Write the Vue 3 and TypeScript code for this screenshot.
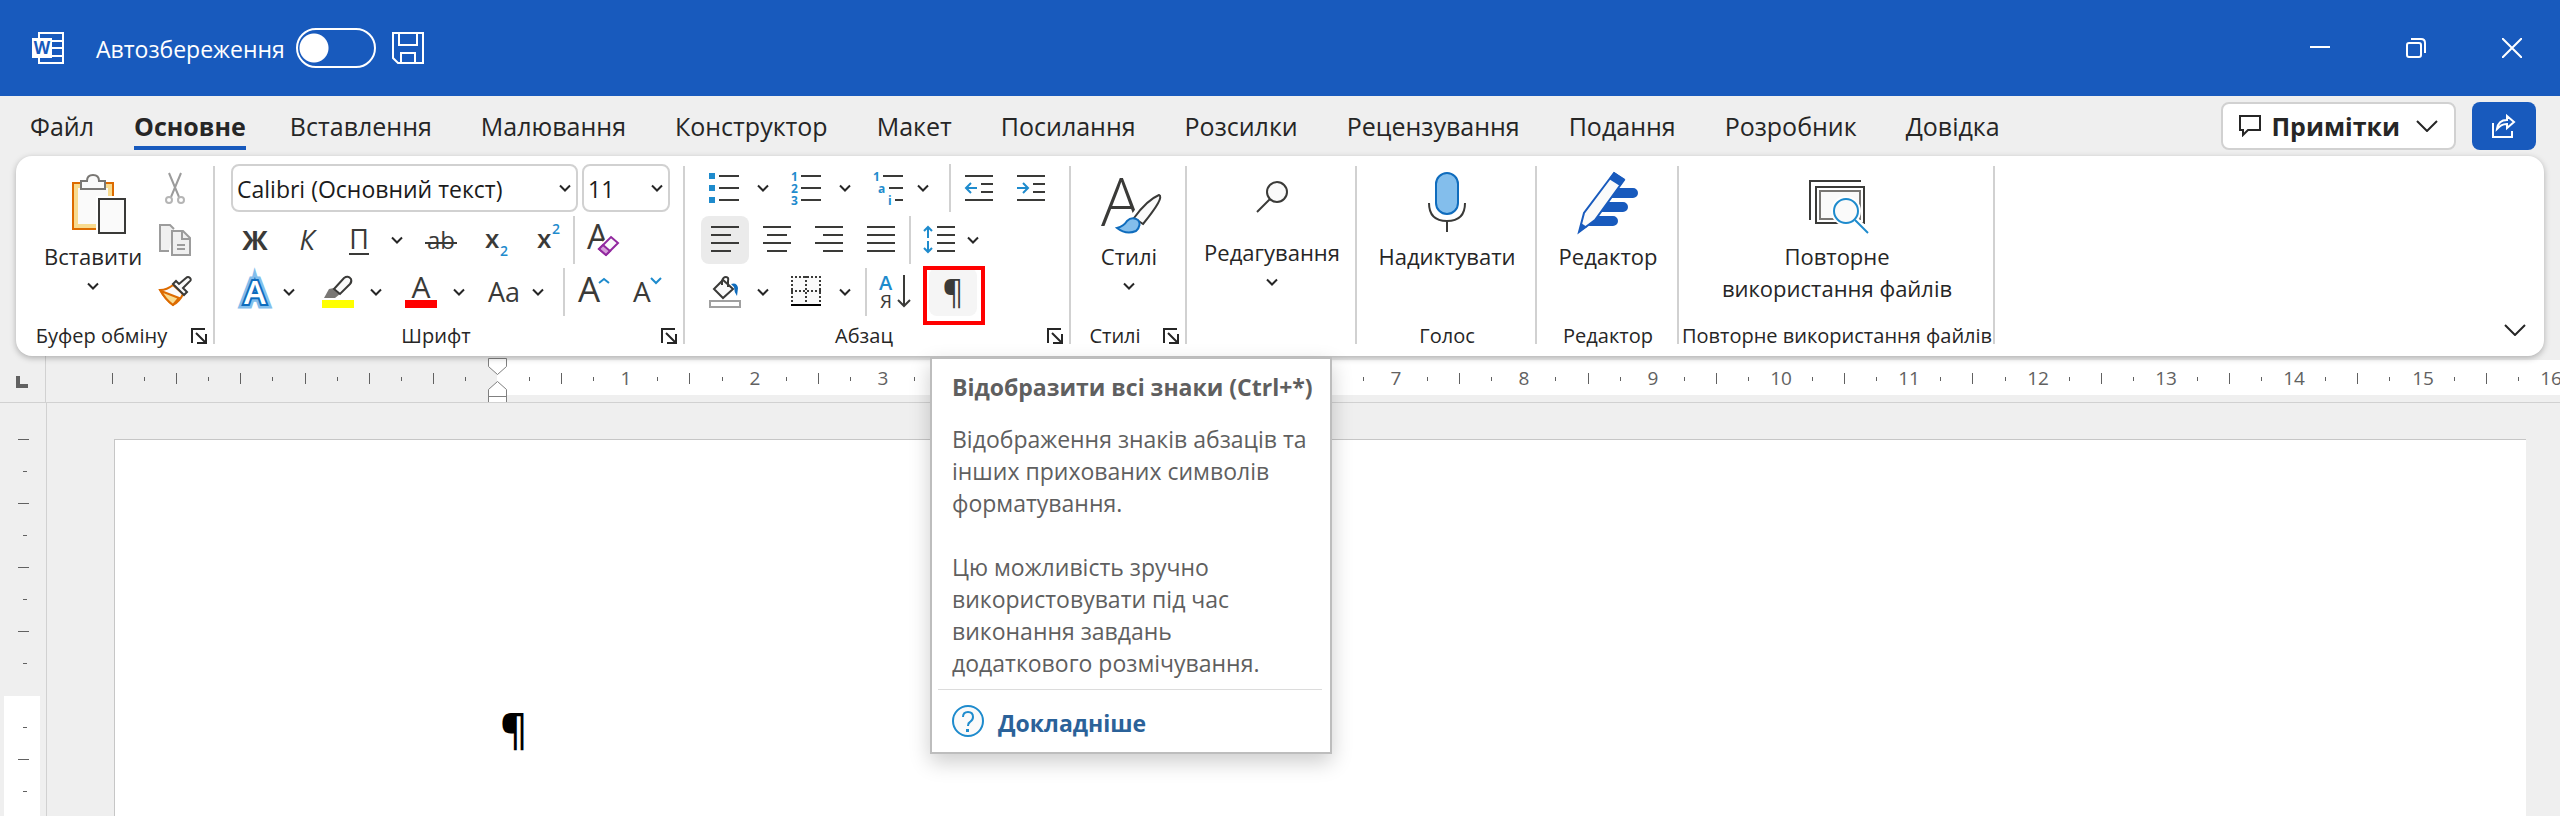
<script setup lang="ts">
import { ref } from 'vue'

const autosave = ref(false)
const fontName = ref('Calibri (Основний текст)')
const fontSize = ref('11')
const activeTab = ref('Основне')

const tabs: string[] = [
  'Файл', 'Основне', 'Вставлення', 'Малювання', 'Конструктор', 'Макет',
  'Посилання', 'Розсилки', 'Рецензування', 'Подання', 'Розробник', 'Довідка',
]

interface Tick { pos: number; long: boolean }
interface Mark { pos: number; label: string }

const unit = 128.3
const zero = 451

const ticks: Tick[] = []
const marks: Mark[] = []
for (let q = -12; q <= 64; q++) {
  const pos = Math.round(zero + (q * unit) / 4)
  if (q === 0) continue
  if (q > 0 && q % 4 === 0) marks.push({ pos: pos + 1, label: String(q / 4) })
  else ticks.push({ pos, long: q % 2 === 0 })
}

const sideTicks: Tick[] = []
for (let q = -8; q <= 20; q++) {
  if (q === 0 || (q > 0 && q % 4 === 0)) continue
  sideTicks.push({ pos: 292 + q * 32, long: q % 2 === 0 })
}

const alignments = [
  { name: 'Вирівняти за лівим краєм', d: 'M0 3H28M0 11H20M0 19H28M0 27H20', on: true },
  { name: 'По центру', d: 'M0 3H28M4 11H24M0 19H28M4 27H24', on: false },
  { name: 'Вирівняти за правим краєм', d: 'M0 3H28M8 11H28M0 19H28M8 27H28', on: false },
  { name: 'По ширині', d: 'M0 3H28M0 11H28M0 19H28M0 27H28', on: false },
]
</script>

<template>
  <div class="app">
    <svg class="defs" aria-hidden="true">
      <symbol id="chevron" viewBox="0 0 12 8">
        <path d="M1 1.5L6 6.5L11 1.5" fill="none" stroke="#262626" stroke-width="2" />
      </symbol>
      <symbol id="chevron-wide" viewBox="0 0 22 12">
        <path d="M1 1L11 11L21 1" fill="none" stroke="#262626" stroke-width="2" />
      </symbol>
      <symbol id="launcher" viewBox="0 0 16 16">
        <path d="M1 15V1H14M15 6V15H6M5 5L14 14" fill="none" stroke="#262626" stroke-width="2" />
      </symbol>
    </svg>

    <header class="titlebar">
      <svg class="word" width="32" height="32" viewBox="0 0 32 32" aria-hidden="true">
        <path d="M7 1H31V31H7ZM7 9H31M7 16H31M7 24H31" fill="none" stroke="#fff" stroke-width="2" />
        <rect x="0" y="6" width="20" height="20" fill="#fff" />
        <text x="10" y="22" text-anchor="middle" font-size="17" font-weight="700" fill="#185abd">W</text>
      </svg>
      <label class="autosave">
        <span>Автозбереження</span>
        <input v-model="autosave" type="checkbox" role="switch" />
      </label>
      <button class="save" aria-label="Зберегти">
        <svg width="32" height="32" viewBox="0 0 32 32">
          <path d="M1 1H31V31H6L1 26ZM7 1V13H25V1M9 31V21H23V31" fill="none" stroke="#fff" stroke-width="2" />
        </svg>
      </button>
      <div class="window-buttons">
        <button aria-label="Згорнути">
          <svg width="20" height="20" viewBox="0 0 20 20"><path d="M0 9H20" stroke="#fff" stroke-width="2" /></svg>
        </button>
        <button aria-label="Відновити">
          <svg width="20" height="20" viewBox="0 0 20 20" fill="none" stroke="#fff" stroke-width="2">
            <rect x="1" y="5" width="14" height="14" rx="2" />
            <path d="M5 1H15Q19 1 19 5V15" />
          </svg>
        </button>
        <button aria-label="Закрити">
          <svg width="20" height="20" viewBox="0 0 20 20"><path d="M0 0L20 20M20 0L0 20" stroke="#fff" stroke-width="2" /></svg>
        </button>
      </div>
    </header>

    <div class="tabbar">
      <nav class="tabs">
        <button
          v-for="t in tabs"
          :key="t"
          class="tab"
          :class="{ active: t === activeTab }"
          @click="activeTab = t"
        >{{ t }}</button>
      </nav>
      <button class="comments">
        <svg width="22" height="22" viewBox="0 0 22 22">
          <path d="M1 1H21V15H9L4 20V15H1Z" fill="none" stroke="#262626" stroke-width="2" />
        </svg>
        <span>Примітки</span>
        <svg width="22" height="12"><use href="#chevron-wide" /></svg>
      </button>
      <button class="share" aria-label="Спільний доступ">
        <svg width="24" height="24" viewBox="0 0 24 24" fill="none" stroke="#fff" stroke-width="2">
          <path d="M1 9V23H20V17" />
          <path d="M5 15C6 8 10 6 15 6V2L22 8L15 14V10C10 10 8 12 5 15Z" />
        </svg>
      </button>
    </div>

    <section class="ribbon">
      <div class="group clipboard">
        <div class="body">
          <button class="big">
            <svg width="64" height="64" viewBox="-6 0 64 64">
              <rect x="6" y="13" width="40" height="46" fill="#f8db8f" stroke="#dd6b00" stroke-width="2" />
              <rect x="11" y="18" width="30" height="36" fill="#fafafa" />
              <path d="M14 11H20Q20 5 26 5T32 11H38V19H14Z" fill="#fafafa" stroke="#797774" stroke-width="2" />
              <rect x="29" y="26" width="32" height="40" fill="#fff" />
              <rect x="32" y="29" width="26" height="34" fill="#fafafa" stroke="#3a3a38" stroke-width="2" />
            </svg>
            <span>Вставити</span>
            <svg class="down" width="12" height="8"><use href="#chevron" /></svg>
          </button>
          <div class="stack">
            <button class="tool" aria-label="Вирізати">
              <svg width="32" height="32" viewBox="0 0 32 32" fill="none" stroke="#9c9c9c">
                <path d="M10 1L20 25M22 1L12 25" stroke-width="2" />
                <circle cx="10" cy="28" r="3" stroke="#b5b5b5" stroke-width="2" />
                <circle cx="22" cy="28" r="3" stroke="#b5b5b5" stroke-width="2" />
              </svg>
            </button>
            <button class="tool" aria-label="Копіювати">
              <svg width="32" height="32" viewBox="0 0 32 32" fill="#f0f0f0" stroke="#9c9c9c" stroke-width="2">
                <path d="M10 27H1V1H11L15 5" />
                <path d="M13 7H24L31 14V31H13Z" />
                <path d="M23 7V15H31M18 21H26M18 25H26" fill="none" />
              </svg>
            </button>
            <button class="tool" aria-label="Формат за зразком">
              <svg width="32" height="32" viewBox="0 0 32 32" fill="none" stroke-width="2">
                <path d="M14 9Q8 14 1 14Q6 23 14 29Q21 25 24 18Z" fill="#fafafa" stroke="#dd6b00" />
                <path d="M2 15L20 22L14 29Q6 23 2 15Z" fill="#f8db8f" stroke="#dd6b00" />
                <path d="M14 8L17 5L20 8L27 2Q29 0 31 2T30 6L24 12L28 16L25 19Z" fill="#fafafa" stroke="#3a3a38" />
              </svg>
            </button>
          </div>
        </div>
        <footer><span>Буфер обміну</span><button class="launch" aria-label="Параметри буфера обміну"><svg width="16" height="16"><use href="#launcher" /></svg></button></footer>
      </div>

      <div class="group font">
        <div class="rows">
          <div class="row combos">
            <span class="combo name">
              <select v-model="fontName" aria-label="Шрифт"><option>Calibri (Основний текст)</option></select>
              <svg width="12" height="8"><use href="#chevron" /></svg>
            </span>
            <span class="combo size">
              <select v-model="fontSize" aria-label="Розмір шрифту"><option>11</option><option>12</option></select>
              <svg width="12" height="8"><use href="#chevron" /></svg>
            </span>
          </div>
          <div class="row">
            <button class="tool letter bold">Ж</button>
            <button class="tool letter italic">К</button>
            <button class="tool letter under"><span>П</span></button>
            <button class="drop" aria-label="Стиль підкреслення"><svg width="12" height="8"><use href="#chevron" /></svg></button>
            <button class="tool after-drop" aria-label="Закреслення">
              <svg width="32" height="32" viewBox="0 0 32 32">
                <text x="16" y="25" text-anchor="middle" font-size="24" fill="#3a3a38">ab</text>
                <path d="M0 19H32" stroke="#3a3a38" stroke-width="2" />
              </svg>
            </button>
            <button class="tool" aria-label="Нижній індекс">
              <svg width="32" height="36" viewBox="0 0 32 36">
                <text x="8" y="26" font-size="26" font-weight="600" fill="#3a3a38">x</text>
                <text x="23" y="34" font-size="14" font-weight="600" fill="#1e8bcd">2</text>
              </svg>
            </button>
            <button class="tool" aria-label="Верхній індекс">
              <svg width="32" height="36" viewBox="0 0 32 36">
                <text x="8" y="26" font-size="26" font-weight="600" fill="#3a3a38">x</text>
                <text x="23" y="12" font-size="14" font-weight="600" fill="#1e8bcd">2</text>
              </svg>
            </button>
            <i class="sep" />
            <button class="tool" aria-label="Очистити все форматування">
              <svg width="32" height="32" viewBox="0 0 32 32">
                <text x="0" y="25" font-size="34" font-weight="400" fill="#3a3a38">A</text>
                <path d="M24 13L31 19L19 31L12 25Z" fill="#fff" stroke="#fff" stroke-width="5" />
                <path d="M24 13L31 19L19 31L12 25Z" fill="#fafafa" stroke="#92299f" stroke-width="2" />
                <path d="M16 21L23 27L19 31L12 25Z" fill="#d59ed9" stroke="#92299f" stroke-width="2" />
              </svg>
            </button>
          </div>
          <div class="row grid83">
            <div class="split tight">
              <button class="tool" aria-label="Текстові ефекти">
                <svg width="36" height="34" viewBox="0 0 36 34">
                  <g font-size="33" font-weight="600" text-anchor="middle">
                    <text x="18" y="29" fill="#83beec" stroke="#83beec" stroke-width="9">A</text>
                    <text x="18" y="29" fill="#0f6cbd" stroke="#0f6cbd" stroke-width="4">A</text>
                    <text x="18" y="29" fill="#fff">A</text>
                  </g>
                </svg>
              </button>
              <button class="drop" aria-label="Вибрати ефект"><svg width="12" height="8"><use href="#chevron" /></svg></button>
            </div>
            <div class="split">
              <button class="tool" aria-label="Колір виділення тексту">
                <svg width="32" height="32" viewBox="0 0 32 32">
                  <path d="M2 22L7 13L12 12L18 18L13 22Z" fill="#797774" />
                  <path d="M12 13L22 2Q26 -1 29 3Q30 6 28 8L18 18Z" fill="#fafafa" stroke="#3a3a38" stroke-width="2" />
                  <rect y="24" width="32" height="8" fill="#ff0" />
                </svg>
              </button>
              <button class="drop" aria-label="Вибрати колір виділення"><svg width="12" height="8"><use href="#chevron" /></svg></button>
            </div>
            <div class="split">
              <button class="tool" aria-label="Колір шрифту">
                <svg width="32" height="32" viewBox="0 0 32 32">
                  <text x="16" y="22" text-anchor="middle" font-size="30" fill="#3a3a38">A</text>
                  <rect y="24" width="32" height="8" fill="#f00" />
                </svg>
              </button>
              <button class="drop" aria-label="Вибрати колір шрифту"><svg width="12" height="8"><use href="#chevron" /></svg></button>
            </div>
            <div class="split tight">
              <button class="tool letter">Aa</button>
              <button class="drop" aria-label="Регістр"><svg width="12" height="8"><use href="#chevron" /></svg></button>
            </div>
            <i class="sep" />
            <button class="tool" aria-label="Збільшити розмір шрифту">
              <svg width="32" height="32" viewBox="0 0 32 32">
                <text x="1" y="26" font-size="35" fill="#3a3a38">A</text>
                <path d="M22 7L27 3L32 7" fill="none" stroke="#1e8bcd" stroke-width="2" />
              </svg>
            </button>
            <button class="tool" aria-label="Зменшити розмір шрифту">
              <svg width="32" height="32" viewBox="0 0 32 32">
                <text x="4" y="26" font-size="28" fill="#3a3a38">A</text>
                <path d="M22 2L27 7L32 2" fill="none" stroke="#1e8bcd" stroke-width="2" />
              </svg>
            </button>
          </div>
        </div>
        <footer><span>Шрифт</span><button class="launch" aria-label="Параметри шрифту"><svg width="16" height="16"><use href="#launcher" /></svg></button></footer>
      </div>

      <div class="group para">
        <div class="rows">
          <div class="row">
            <div class="split">
              <button class="tool" aria-label="Маркери">
                <svg width="32" height="30" viewBox="0 0 32 30">
                  <path d="M0 3H6M0 15H6M0 27H6" stroke="#1e8bcd" stroke-width="6" />
                  <path d="M10 3H30M10 15H30M10 27H30" stroke="#3a3a38" stroke-width="2" />
                </svg>
              </button>
              <button class="drop" aria-label="Бібліотека маркерів"><svg width="12" height="8"><use href="#chevron" /></svg></button>
            </div>
            <div class="split">
              <button class="tool" aria-label="Нумерація">
                <svg width="32" height="34" viewBox="0 -2 32 34">
                  <g font-size="12" font-weight="700" fill="#1e8bcd">
                    <text x="0" y="8">1</text><text x="0" y="20">2</text><text x="0" y="32">3</text>
                  </g>
                  <path d="M10 3H30M10 15H30M10 27H30" stroke="#3a3a38" stroke-width="2" />
                </svg>
              </button>
              <button class="drop" aria-label="Бібліотека нумерації"><svg width="12" height="8"><use href="#chevron" /></svg></button>
            </div>
            <div class="split tight">
              <button class="tool" aria-label="Багаторівневий список">
                <svg width="32" height="34" viewBox="0 -2 32 34">
                  <g font-size="12" font-weight="700" fill="#1e8bcd">
                    <text x="0" y="8">1</text><text x="5" y="20">a</text><text x="15" y="32">i</text>
                  </g>
                  <path d="M10 3H30M16 15H30M22 27H30" stroke="#3a3a38" stroke-width="2" />
                </svg>
              </button>
              <button class="drop" aria-label="Бібліотека списків"><svg width="12" height="8"><use href="#chevron" /></svg></button>
            </div>
            <i class="sep" />
            <button class="tool" aria-label="Зменшити відступ">
              <svg width="28" height="30" viewBox="0 0 28 30" fill="none" stroke-width="2">
                <path d="M0 3H28M16 11H28M16 19H28M0 27H28" stroke="#3a3a38" />
                <path d="M12 15H2M6 10L1 15L6 20" stroke="#1e8bcd" />
              </svg>
            </button>
            <button class="tool" aria-label="Збільшити відступ">
              <svg width="28" height="30" viewBox="0 0 28 30" fill="none" stroke-width="2">
                <path d="M0 3H28M16 11H28M16 19H28M0 27H28" stroke="#3a3a38" />
                <path d="M0 15H10M6 10L11 15L6 20" stroke="#1e8bcd" />
              </svg>
            </button>
          </div>
          <div class="row">
            <button v-for="a in alignments" :key="a.name" class="tool" :class="{ on: a.on }" :aria-label="a.name">
              <svg width="28" height="32" viewBox="0 0 28 32"><path :d="a.d" stroke="#3a3a38" stroke-width="2" /></svg>
            </button>
            <i class="sep even" />
            <div class="split tight">
              <button class="tool" aria-label="Міжрядковий інтервал">
                <svg width="32" height="32" viewBox="0 0 32 32" fill="none" stroke-width="2">
                  <path d="M5 14V3M1 7L5 3L9 7M5 17V28M1 24L5 28L9 24" stroke="#1e8bcd" />
                  <path d="M14 3H32M14 11H32M14 19H32M14 27H32" stroke="#3a3a38" />
                </svg>
              </button>
              <button class="drop" aria-label="Вибрати інтервал"><svg width="12" height="8"><use href="#chevron" /></svg></button>
            </div>
          </div>
          <div class="row">
            <div class="split">
              <button class="tool" aria-label="Заливка">
                <svg width="32" height="32" viewBox="0 0 32 32" fill="none" stroke-width="2">
                  <path d="M5 13L14 4L24 13L14 22Z" fill="#fafafa" stroke="#3a3a38" />
                  <path d="M13 9V5Q14 1 17 1T19 5V11" stroke="#3a3a38" />
                  <path d="M22 8Q28 6 29 12L28 20Q25 16 25 11Z" fill="#0f6cbd" />
                  <rect x="1" y="25" width="30" height="6" fill="#fff" stroke="#a0a0a0" />
                </svg>
              </button>
              <button class="drop" aria-label="Колір заливки"><svg width="12" height="8"><use href="#chevron" /></svg></button>
            </div>
            <div class="split">
              <button class="tool" aria-label="Межі">
                <svg width="32" height="32" viewBox="0 0 32 32" fill="none" stroke-width="2">
                  <rect x="1" y="1" width="28" height="28" fill="#fafafa" />
                  <path d="M0 1H30M1 0V28M29 0V28M0 15H30M15 0V28" stroke="#3a3a38" stroke-dasharray="2 2" />
                  <path d="M0 29H30" stroke="#000" />
                </svg>
              </button>
              <button class="drop" aria-label="Вибрати межі"><svg width="12" height="8"><use href="#chevron" /></svg></button>
            </div>
            <i class="sep" />
            <button class="tool" aria-label="Сортування">
              <svg width="32" height="34" viewBox="0 0 32 34">
                <text x="0" y="15" font-size="20" font-weight="600" fill="#1e8bcd">А</text>
                <text x="1" y="33" font-size="19" font-weight="500" fill="#3a3a38">Я</text>
                <path d="M25 0V31M19 25L25 31L31 25" fill="none" stroke="#3a3a38" stroke-width="2" />
              </svg>
            </button>
            <button class="tool letter marks" aria-describedby="tip">¶<i class="frame" /></button>
          </div>
        </div>
        <footer><span>Абзац</span><button class="launch" aria-label="Параметри абзацу"><svg width="16" height="16"><use href="#launcher" /></svg></button></footer>
      </div>

      <div class="group styles">
        <div class="body">
          <button class="big">
            <svg width="64" height="64" viewBox="0 0 64 64">
              <text x="4" y="56" font-size="67" font-weight="300" fill="#3a3a38">A</text>
              <path d="M34 50Q46 30 61 24Q66 30 46 54Z" fill="#fff" stroke="#fff" stroke-width="5" />
              <path d="M37 48Q50 30 62 25Q68 27 46 54Z" fill="#fafafa" stroke="#3a3a38" stroke-width="2" />
              <path d="M20 58Q27 56 30 51Q35 46 41 50Q45 55 39 61Q29 65 20 58Z" fill="#83beec" stroke="#0f6cbd" stroke-width="2" />
            </svg>
            <span>Стилі</span>
            <svg class="down" width="12" height="8"><use href="#chevron" /></svg>
          </button>
        </div>
        <footer><span>Стилі</span><button class="launch" aria-label="Параметри стилів"><svg width="16" height="16"><use href="#launcher" /></svg></button></footer>
      </div>

      <div class="group editing">
        <div class="body">
          <button class="big">
            <svg width="32" height="60" viewBox="0 0 32 60" fill="none" stroke="#3a3a38" stroke-width="2">
              <circle cx="21" cy="22" r="10" fill="#fafafa" />
              <path d="M14 29L1 42" />
            </svg>
            <span>Редагування</span>
            <svg class="down" width="12" height="8"><use href="#chevron" /></svg>
          </button>
        </div>
      </div>

      <div class="group voice">
        <div class="body">
          <button class="big">
            <svg width="64" height="64" viewBox="0 0 64 64" fill="none" stroke-width="2">
              <rect x="21" y="3" width="22" height="41" rx="11" fill="#83beec" stroke="#0f6cbd" />
              <path d="M14 33Q14 51 32 51T50 33M32 51V62" stroke="#3a3a38" />
            </svg>
            <span>Надиктувати</span>
          </button>
        </div>
        <footer><span>Голос</span></footer>
      </div>

      <div class="group editor">
        <div class="body">
          <button class="big">
            <svg width="64" height="64" viewBox="0 0 64 64">
              <path d="M30 23H57M22 37H47M14 51H37" stroke="#185abd" stroke-width="10" stroke-linecap="round" />
              <path d="M38 3L48 10L19 50L3 62L8 43Z" fill="#fafafa" stroke="#185abd" stroke-width="2" />
              <path d="M38 2L49 9L44 16L33 9Z" fill="#185abd" />
              <path d="M3 62L5 53L11 57Z" fill="#185abd" />
            </svg>
            <span>Редактор</span>
          </button>
        </div>
        <footer><span>Редактор</span></footer>
      </div>

      <div class="group reuse">
        <div class="body">
          <button class="big">
            <svg width="64" height="64" viewBox="0 0 64 64" fill="none" stroke-width="2">
              <path d="M5 50V11H56" stroke="#3a3a38" />
              <rect x="11" y="17" width="48" height="36" fill="#fff" stroke="#3a3a38" />
              <rect x="15" y="21" width="40" height="28" fill="#fafafa" stroke="#797774" />
              <circle cx="41" cy="41" r="15" fill="#fff" />
              <path d="M49 50L64 64" stroke="#fff" stroke-width="8" />
              <circle cx="41" cy="41" r="12" fill="#fafafa" stroke="#1e8bcd" />
              <path d="M50 50L63 63" stroke="#1e8bcd" />
            </svg>
            <span>Повторне<br />використання файлів</span>
          </button>
        </div>
        <footer><span>Повторне використання файлів</span></footer>
      </div>

      <button class="collapse" aria-label="Згорнути стрічку"><svg width="22" height="12"><use href="#chevron-wide" /></svg></button>

      <aside id="tip" class="tooltip" role="tooltip">
        <h2>Відобразити всі знаки (Ctrl+*)</h2>
        <p>Відображення знаків абзаців та<br />інших прихованих символів<br />форматування.</p>
        <p>Цю можливість зручно<br />використовувати під час<br />виконання завдань<br />додаткового розмічування.</p>
        <div class="more">
          <svg width="32" height="32" viewBox="0 0 32 32" fill="none">
            <circle cx="16" cy="16" r="15" fill="#fafafa" stroke="#1e8bcd" stroke-width="2" />
            <path d="M11 12Q11 7 16 7T21 12Q21 15 18 17Q16 18 16 21" stroke="#1e8bcd" stroke-width="2" />
            <rect x="14" y="24" width="3" height="3" fill="#1e8bcd" />
          </svg>
          <a href="#">Докладніше</a>
        </div>
      </aside>
    </section>

    <div class="ruler">
      <button class="tabstop" aria-label="Тип табуляції">
        <svg width="12" height="12" viewBox="0 0 12 12"><path d="M2 0V10H12" fill="none" stroke="#616161" stroke-width="4" /></svg>
      </button>
      <svg class="scale" height="46" aria-hidden="true">
        <rect :x="zero" y="4" width="100%" height="35" fill="#fff" />
        <rect
          v-for="t in ticks"
          :key="t.pos"
          :x="t.pos"
          :y="t.long ? 17 : 21"
          width="1"
          :height="t.long ? 11 : 4"
          fill="#616161"
        />
        <text v-for="m in marks" :key="m.label" :x="m.pos" y="29" text-anchor="middle">{{ m.label }}</text>
        <path d="M442 2H460V10L451 18L442 10ZM451 25L460 33V46H442V33ZM442 40H460" transform="translate(.5 .5)" fill="#fff" stroke="#808080" />
      </svg>
    </div>

    <main class="workspace">
      <svg class="side" width="46" aria-hidden="true">
        <rect x="4" y="293" width="36" height="100%" fill="#fff" />
        <rect
          v-for="t in sideTicks"
          :key="t.pos"
          :x="t.long ? 18 : 23"
          :y="t.pos"
          :width="t.long ? 11 : 4"
          height="1"
          fill="#616161"
        />
      </svg>
      <div class="canvas">
        <article class="page"><p>¶</p></article>
      </div>
    </main>
  </div>
</template>

<style>
html, body { background: #efefef; }
</style>

<style scoped>
.app {
  display: flex;
  flex-direction: column;
  min-height: 100vh;
  overflow: hidden;
  font-family: "Open Sans", "Noto Sans", sans-serif;
  font-size: 22px;
  line-height: 32px;
  color: #262626;
  background: #efefef;
}
.defs { position: absolute; width: 0; height: 0; }
svg { display: block; flex: none; }
.tool svg, .big svg { overflow: visible; }
button {
  padding: 0;
  border: 0;
  background: none;
  font: inherit;
  color: inherit;
}

.titlebar {
  display: flex;
  align-items: center;
  height: 96px;
  padding-left: 32px;
  background: #185abd;
  color: #fff;
  font-size: 23px;
}
.autosave { display: flex; align-items: center; gap: 11px; margin: 0 16px 0 32px; }
.autosave span { padding-top: 2px; }
.autosave input {
  appearance: none;
  box-sizing: border-box;
  width: 80px;
  height: 40px;
  margin: 0;
  border: 2px solid #fff;
  border-radius: 20px;
  background: radial-gradient(circle at 16px 18px, #fff 14px, transparent 15px);
}
.window-buttons { display: flex; margin-left: auto; }
.window-buttons button { display: grid; place-items: center; width: 96px; height: 96px; }

.tabbar { display: flex; align-items: center; height: 60px; padding: 0 24px 0 30px; }
.tabs { display: flex; gap: 49px; flex: 1; }
.tab {
  height: 48px;
  box-sizing: border-box;
  padding-top: 4px;
  font-size: 25px;
  white-space: nowrap;
  border-bottom: 4px solid transparent;
}
.tab.active {
  margin: 0 -5px 0 -9px;
  font-weight: 700;
  border-image: linear-gradient(#185abd, #185abd) 1;
}
.comments {
  display: flex;
  align-items: center;
  gap: 10px;
  box-sizing: border-box;
  height: 48px;
  padding: 0 16px;
  margin-right: 16px;
  border: 2px solid #d1d1d1;
  border-radius: 8px;
  background: #fff;
  font-size: 25px;
  font-weight: 700;
}
.comments span { margin-right: 6px; }
.share {
  display: grid;
  place-items: center;
  width: 64px;
  height: 48px;
  border-radius: 8px;
  background: #185abd;
}

.ribbon {
  position: relative;
  z-index: 1;
  display: flex;
  height: 200px;
  margin: 0 16px;
  border-radius: 16px;
  background: #fff;
  box-shadow: 0 2px 6px rgba(0, 0, 0, 0.28);
}
.group {
  position: relative;
  display: flex;
  flex-direction: column;
  justify-content: space-between;
  box-sizing: border-box;
  padding: 8px 0 4px;
}
.group::after {
  content: "";
  position: absolute;
  right: 0;
  top: 10px;
  bottom: 12px;
  width: 2px;
  background: #d1d1d1;
}
.clipboard { width: 199px; }
.font { width: 470px; padding-left: 16px; }
.para { width: 386px; padding-left: 16px; }
.styles { width: 116px; }
.editing { width: 170px; }
.voice { width: 180px; }
.editor { width: 142px; }
.reuse { width: 316px; }

.group footer {
  display: flex;
  align-items: center;
  gap: 4px;
  height: 32px;
  padding-right: 8px;
  font-size: 20px;
  text-align: center;
  white-space: nowrap;
}
.group footer span { flex: 1; }
.font footer, .para footer { margin-left: -16px; }
.voice footer, .editor footer, .reuse footer { padding: 0; }
.launch { width: 16px; height: 16px; }

.body { display: flex; justify-content: center; }
.big {
  display: flex;
  flex-direction: column;
  align-items: center;
  padding-top: 6px;
  text-align: center;
}
.big span { margin-top: 6px; }
.down { margin-top: 10px; }
.clipboard .body { justify-content: flex-start; padding-left: 28px; gap: 9px; }
.stack { display: flex; flex-direction: column; gap: 4px; }

.rows { display: flex; flex-direction: column; gap: 4px; }
.row { display: flex; align-items: center; height: 48px; }
.tool {
  display: grid;
  place-items: center;
  flex: none;
  width: 48px;
  height: 48px;
  border-radius: 8px;
}
.tool.on { background: #ebebeb; }
.drop { display: grid; place-items: center; width: 20px; height: 48px; }
.sep { flex: none; width: 2px; height: 48px; margin-right: 4px; background: #d1d1d1; }
.sep.even { margin-left: 4px; }
.split { display: flex; gap: 4px; width: 82px; flex: none; }
.split.tight { gap: 0; }
.font .row { gap: 4px; }
.font .grid83 { display: grid; grid-template-columns: repeat(4, 79px) 2px 48px 48px; }
.font .split { width: 79px; }
.font .sep { margin: 0; }
.font .after-drop { margin-left: 6px; }
.para .row:first-child .split.tight { width: 84px; }
.para .tool + .tool { margin-left: 4px; }
.letter { font-size: 27px; color: #3a3a38; }
.bold { font-weight: 700; }
.italic { font-style: italic; }
.under span { border-bottom: 2px solid #3a3a38; line-height: 28px; }
.para .tool.marks { position: relative; margin-left: 10px; background: #f5f5f5; font-size: 32px; }
.frame {
  position: absolute;
  inset: -2px -8px -9px -6px;
  border: 4px solid #f00;
}

.combos { gap: 4px; }
.combo { position: relative; display: flex; align-items: center; height: 48px; }
.combo.name { width: 347px; }
.combo.size { width: 88px; }
.combo select {
  appearance: none;
  box-sizing: border-box;
  width: 100%;
  height: 100%;
  padding: 2px 4px 0;
  border: 2px solid #d1d1d1;
  border-radius: 8px;
  background: #fff;
  font: inherit;
  font-size: 23px;
  color: #1b1b1b;
}
.combo svg { position: absolute; right: 7px; pointer-events: none; }

.collapse { margin: auto 18px 20px auto; height: 12px; }

.tooltip {
  position: absolute;
  top: 201px;
  left: 914px;
  box-sizing: border-box;
  width: 402px;
  padding: 12px 8px 0 20px;
  border: 2px solid #bdbdbd;
  background: #fff;
  box-shadow: 0 8px 20px rgba(0, 0, 0, 0.2);
  color: #5f5f5f;
  font-size: 23px;
  white-space: nowrap;
}
.tooltip h2 { margin: 0 0 20px; font-size: 23px; font-weight: 700; line-height: 32px; }
.tooltip p { margin: 0 0 32px; }
.tooltip p + p { margin-bottom: 10px; }
.more {
  display: flex;
  align-items: center;
  gap: 14px;
  height: 62px;
  margin-left: -14px;
  padding-left: 14px;
  border-top: 1px solid #dcdcdc;
}
.more a { padding-top: 4px; color: #2b6299; font-weight: 700; text-decoration: none; }

.ruler { display: flex; height: 46px; border-bottom: 1px solid #d1d1d1; }
.tabstop { display: grid; place-items: center; width: 46px; padding: 6px 2px 0 0; border-right: 1px solid #d1d1d1; }
.scale { flex: 1; width: 100%; overflow: hidden; font-size: 19px; }
.scale text { fill: #616161; }

.workspace { display: flex; flex: 1; }
.side { height: auto; align-self: stretch; }
.canvas { flex: 1; display: flex; padding: 36px 34px 0 67px; border-left: 1px solid #d1d1d1; }
.page {
  flex: 1;
  border-top: 1px solid #c6c6c6;
  border-left: 1px solid #c6c6c6;
  background: #fff;
  padding: 260px 385px 0;
}
.page p { margin: 0; font-size: 42px; line-height: 56px; font-weight: 600; color: #000; }
</style>
